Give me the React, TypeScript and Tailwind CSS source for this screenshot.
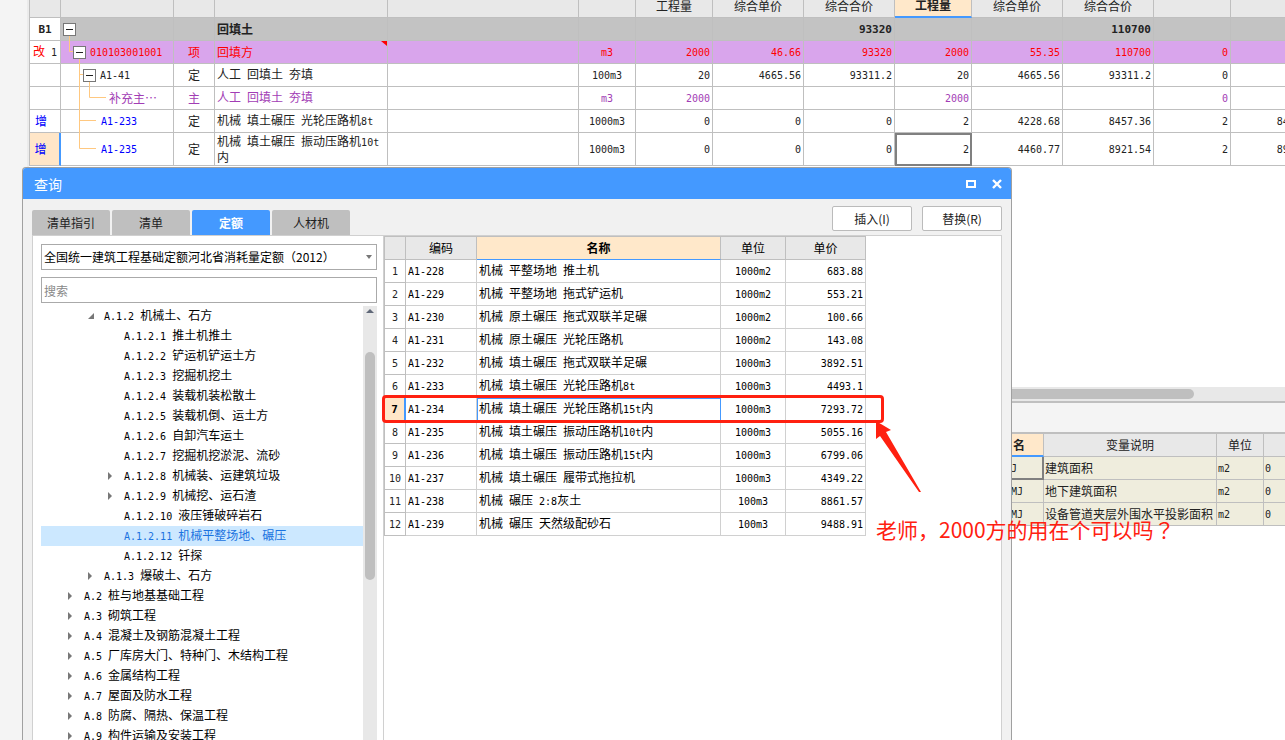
import { ReactNode } from "react";

// Latin runs are set in a half-width mono face so they line up with the CJK grid
function Mix({ children, bold }: { children: string; bold?: boolean }) {
  return (
    <>
      {children.split(/([\x20-\x7e]+)/).map((part, i) =>
        i % 2 ? (
          <span key={i} className={bold ? "font-[DejaVu_Sans_Mono,monospace] text-[11px]" : "font-[DejaVu_Sans_Mono,monospace] text-[10px]"}>
            {part}
          </span>
        ) : (
          part
        )
      )}
    </>
  );
}

type BillRow = {
  mark: ReactNode;
  code: string;
  kind: string;
  name: string;
  values: string[];
  pad: string;
  box?: boolean;
  lines: string;
  tone: string;
  cell: string;
  height: string;
};

const billRows: BillRow[] = [
  { mark: <span className="font-bold"><Mix bold>B1</Mix></span>, code: "", kind: "", name: "回填土", values: ["", "", "", "93320", "", "", "110700", "", ""], pad: "pl-0.5", box: true, lines: "M8.5 17V23", tone: "text-[#222] font-bold", cell: "bg-[#c3c3c3]", height: "h-[23px]" },
  { mark: <>改<span className="text-[#222]"><Mix> 1</Mix></span></>, code: "010103001001", kind: "项", name: "回填方", values: ["m3", "2000", "46.66", "93320", "2000", "55.35", "110700", "0", ""], pad: "pl-3", box: true, lines: "M8.5 0V10.5H12M18.5 17V23", tone: "text-[#f00]", cell: "bg-[#d9a5ec]", height: "h-[23px]" },
  { mark: "", code: "A1-41", kind: "定", name: "人工 回填土 夯填", values: ["100m3", "20", "4665.56", "93311.2", "20", "4665.56", "93311.2", "0", ""], pad: "pl-[22px]", box: true, lines: "M18.5 0V23M18.5 10.5H22M28.5 17V23", tone: "text-[#222]", cell: "bg-white", height: "h-[23px]" },
  { mark: "", code: "补充主…", kind: "主", name: "人工 回填土 夯填", values: ["m3", "2000", "", "", "2000", "", "", "0", ""], pad: "pl-12", lines: "M18.5 0V23M28.5 0V10.5H45", tone: "text-[#a23db5]", cell: "bg-white", height: "h-[23px]" },
  { mark: <span className="pr-2 text-[#00f]">增</span>, code: "A1-233", kind: "定", name: "机械 填土碾压 光轮压路机8t", values: ["1000m3", "0", "0", "0", "2", "4228.68", "8457.36", "2", "8457.36"], pad: "pl-10", lines: "M18.5 0V23M18.5 10.5H35", tone: "text-[#222]", cell: "bg-white", height: "h-[23px]" },
  { mark: <span className="pr-2 text-[#00f]">增</span>, code: "A1-235", kind: "定", name: "机械 填土碾压 振动压路机10t内", values: ["1000m3", "0", "0", "0", "2", "4460.77", "8921.54", "2", "8921.54"], pad: "pl-10", lines: "M18.5 0V15.5H35", tone: "text-[#222]", cell: "bg-white", height: "h-[33px]" },
];

const billHeads = ["", "", "", "", "", "", "工程量", "综合单价", "综合合价", "工程量", "综合单价", "综合合价", "", ""];

function BillTable() {
  return (
    <table className="-mt-1.5 w-[1293px] table-fixed border-separate border-spacing-0 border-l border-[#bfbfbf] leading-[14px]">
      <colgroup>
        <col className="w-[31px]" />
        <col className="w-[113px]" />
        <col className="w-[41px]" />
        <col className="w-[173px]" />
        <col className="w-[191px]" />
        <col className="w-[57px]" />
        <col className="w-[77px]" />
        <col className="w-[91px]" />
        <col className="w-[91px]" />
        <col className="w-[77px]" />
        <col className="w-[91px]" />
        <col className="w-[91px]" />
        <col className="w-[77px]" />
        <col className="w-[91px]" />
      </colgroup>
      <thead>
        <tr className="h-6">
          {billHeads.map((h, i) => (
            <th
              key={i}
              className={
                i === 9
                  ? "border-r border-b-2 border-r-[#bfbfbf] border-b-[#4499ff] bg-[#ffe8ca] p-0 font-bold"
                  : "border-r border-b border-[#bfbfbf] bg-[#e8e8e8] p-0 font-normal"
              }
            >
              {h}
            </th>
          ))}
        </tr>
      </thead>
      <tbody>
        {billRows.map((r, i) => (
          <tr key={i} className={`${r.height} ${r.tone}`}>
            <th
              className={
                i === 5
                  ? "border-r-2 border-b border-r-[#4499ff] border-b-[#bfbfbf] bg-[#ffe6c8] p-0 font-normal"
                  : "border-r border-b border-[#bfbfbf] bg-white p-0 font-normal whitespace-nowrap"
              }
            >
              {r.mark}
            </th>
            <td className={`relative border-r border-b border-[#bfbfbf] p-0 ${r.cell}`}>
              <svg className="absolute top-0 left-0 h-full w-full overflow-visible" fill="none" stroke="#ffc880">
                <path d={r.lines} />
              </svg>
              <div className={`relative flex items-center gap-1 whitespace-nowrap ${r.pad}`}>
                {r.box && (
                  <button aria-label="折叠" className="flex size-[13px] shrink-0 items-center justify-center border border-[#777] bg-white">
                    <span className="h-px w-[7px] bg-[#222]" />
                  </button>
                )}
                <span className={i > 3 ? "text-[#00f]" : ""}><Mix>{r.code}</Mix></span>
              </div>
            </td>
            <td className={`border-r border-b border-[#bfbfbf] p-0 text-center ${r.cell}`}>{r.kind}</td>
            <td className={`relative border-r border-b border-[#bfbfbf] px-0.5 py-0 ${r.cell}`}>
              <Mix>{r.name}</Mix>
              {i === 1 && (
                <svg className="absolute top-0 right-0" width="6" height="5" fill="#f00">
                  <path d="M0 0H6V5Z" />
                </svg>
              )}
            </td>
            <td className={`border-r border-b border-[#bfbfbf] p-0 ${r.cell}`} />
            {r.values.map((v, j) => (
              <td
                key={j}
                className={`border-r border-b border-[#bfbfbf] px-0.5 py-0 ${r.cell} ${j === 0 ? "text-center" : "text-right"} ${
                  i === 5 && j === 4 ? "outline-2 -outline-offset-2 outline-[#808080]" : ""
                }`}
              >
                <Mix bold={i === 0}>{v}</Mix>
              </td>
            ))}
          </tr>
        ))}
      </tbody>
    </table>
  );
}

const variables = [
  ["J", "建筑面积"],
  ["MJ", "地下建筑面积"],
  ["MJ", "设备管道夹层外围水平投影面积"],
];

function VariableTable() {
  return (
    <table className="w-full table-fixed border-separate border-spacing-0 leading-[14px]">
      <colgroup>
        <col className="w-[33px]" />
        <col className="w-[173px]" />
        <col className="w-[47px]" />
        <col />
      </colgroup>
      <thead>
        <tr className="h-[23px]">
          <th className="border-r border-b-2 border-r-[#bfbfbf] border-b-[#4499ff] bg-[#ffe8ca] py-0 pl-0.5 text-left font-bold">名</th>
          <th className="border-r border-b border-[#bfbfbf] bg-[#e8e8e8] p-0 font-normal">变量说明</th>
          <th className="border-r border-b border-[#bfbfbf] bg-[#e8e8e8] p-0 font-normal">单位</th>
          <th className="border-b border-[#bfbfbf] bg-[#e8e8e8] p-0" />
        </tr>
      </thead>
      <tbody>
        {variables.map(([code, text], i) => (
          <tr key={i} className="h-[23px] bg-[#efeddd]">
            <td className={i === 0 ? "border-r-2 border-b-2 border-[#808080] p-0" : "border-r border-b border-[#bfbfbf] p-0"}><Mix>{code}</Mix></td>
            <td className="border-r border-b border-[#bfbfbf] px-px py-0 whitespace-nowrap">{text}</td>
            <td className="border-r border-b border-[#bfbfbf] px-px py-0"><Mix>m2</Mix></td>
            <td className="border-b border-[#bfbfbf] px-px py-0"><Mix>0</Mix></td>
          </tr>
        ))}
      </tbody>
    </table>
  );
}

const tree = [
  { level: 1, text: "A.1.2 机械土、石方", arrow: "open" },
  { level: 2, text: "A.1.2.1 推土机推土" },
  { level: 2, text: "A.1.2.2 铲运机铲运土方" },
  { level: 2, text: "A.1.2.3 挖掘机挖土" },
  { level: 2, text: "A.1.2.4 装载机装松散土" },
  { level: 2, text: "A.1.2.5 装载机倒、运土方" },
  { level: 2, text: "A.1.2.6 自卸汽车运土" },
  { level: 2, text: "A.1.2.7 挖掘机挖淤泥、流砂" },
  { level: 2, text: "A.1.2.8 机械装、运建筑垃圾", arrow: "closed" },
  { level: 2, text: "A.1.2.9 机械挖、运石渣", arrow: "closed" },
  { level: 2, text: "A.1.2.10 液压锤破碎岩石" },
  { level: 2, text: "A.1.2.11 机械平整场地、碾压", selected: true },
  { level: 2, text: "A.1.2.12 钎探" },
  { level: 1, text: "A.1.3 爆破土、石方", arrow: "closed" },
  { level: 0, text: "A.2 桩与地基基础工程", arrow: "closed" },
  { level: 0, text: "A.3 砌筑工程", arrow: "closed" },
  { level: 0, text: "A.4 混凝土及钢筋混凝土工程", arrow: "closed" },
  { level: 0, text: "A.5 厂库房大门、特种门、木结构工程", arrow: "closed" },
  { level: 0, text: "A.6 金属结构工程", arrow: "closed" },
  { level: 0, text: "A.7 屋面及防水工程", arrow: "closed" },
  { level: 0, text: "A.8 防腐、隔热、保温工程", arrow: "closed" },
  { level: 0, text: "A.9 构件运输及安装工程", arrow: "closed" },
];
const indent = ["pl-[27px]", "pl-[47px]", "pl-[67px]"];

const quotas = [
  ["A1-228", "机械 平整场地 推土机", "1000m2", "683.88"],
  ["A1-229", "机械 平整场地 拖式铲运机", "1000m2", "553.21"],
  ["A1-230", "机械 原土碾压 拖式双联羊足碾", "1000m2", "100.66"],
  ["A1-231", "机械 原土碾压 光轮压路机", "1000m2", "143.08"],
  ["A1-232", "机械 填土碾压 拖式双联羊足碾", "1000m3", "3892.51"],
  ["A1-233", "机械 填土碾压 光轮压路机8t", "1000m3", "4493.1"],
  ["A1-234", "机械 填土碾压 光轮压路机15t内", "1000m3", "7293.72"],
  ["A1-235", "机械 填土碾压 振动压路机10t内", "1000m3", "5055.16"],
  ["A1-236", "机械 填土碾压 振动压路机15t内", "1000m3", "6799.06"],
  ["A1-237", "机械 填土碾压 履带式拖拉机", "1000m3", "4349.22"],
  ["A1-238", "机械 碾压 2:8灰土", "100m3", "8861.57"],
  ["A1-239", "机械 碾压 天然级配砂石", "100m3", "9488.91"],
];

function QuotaTable() {
  return (
    <table className="w-[482px] table-fixed border-separate border-spacing-0 self-start border-l border-[#bfbfbf] leading-[14px] text-black">
      <colgroup>
        <col className="w-[21px]" />
        <col className="w-[71px]" />
        <col className="w-[244px]" />
        <col className="w-[65px]" />
        <col className="w-20" />
      </colgroup>
      <thead>
        <tr className="h-6">
          {["", "编码", "名称", "单位", "单价"].map((h, i) => (
            <th
              key={i}
              className={
                i === 2
                  ? "border-y border-r border-t-[#bfbfbf] border-r-[#bfbfbf] border-b-[#4499ff] bg-[#ffe8ca] p-0 font-bold"
                  : "border-y border-r border-[#bfbfbf] bg-[#e8e8e8] p-0 font-normal"
              }
            >
              {h}
            </th>
          ))}
        </tr>
      </thead>
      <tbody>
        {quotas.map(([code, name, unit, price], i) => (
          <tr key={code} className="h-[23px]">
            <th
              className={
                i === 6
                  ? "border-r-2 border-b border-r-[#4499ff] border-b-[#bfbfbf] bg-[#ffe6c8] p-0 font-bold"
                  : "border-r border-b border-[#bfbfbf] p-0 font-normal text-[#222]"
              }
            >
              <Mix bold={i === 6}>{String(i + 1)}</Mix>
            </th>
            <td className="border-r border-b border-[#d0d0d0] px-0.5 py-0"><Mix>{code}</Mix></td>
            <td className={`border-r border-b border-[#d0d0d0] px-0.5 py-0 whitespace-nowrap ${i === 6 ? "outline -outline-offset-1 outline-[#4499ff]" : ""}`}><Mix>{name}</Mix></td>
            <td className="border-r border-b border-[#d0d0d0] p-0 text-center"><Mix>{unit}</Mix></td>
            <td className="border-r border-b border-[#d0d0d0] px-0.5 py-0 text-right"><Mix>{price}</Mix></td>
          </tr>
        ))}
      </tbody>
    </table>
  );
}

function QueryDialog() {
  return (
    <section className="absolute top-[167px] bottom-0 left-[22px] flex w-[990px] flex-col overflow-hidden rounded-t border border-b-0 border-[#a0a0a0] bg-[#f1f1f1]">
      <header className="flex h-[31px] shrink-0 items-center justify-between bg-[#4499ff] pr-[9px] pl-[11px] text-white">
        <h2 className="text-sm">查询</h2>
        <div className="flex gap-4">
          <button aria-label="最大化">
            <svg width="10" height="10" fill="none" stroke="#fff" strokeWidth="2"><path d="M1 2H9V8H1Z" /></svg>
          </button>
          <button aria-label="关闭">
            <svg width="10" height="10" fill="none" stroke="#fff" strokeWidth="2.4"><path d="M1 1L9 9M9 1L1 9" /></svg>
          </button>
        </div>
      </header>
      <div className="flex min-h-0 flex-1 flex-col px-[9px] pt-[7px]">
        <div className="flex h-[29px] shrink-0 items-start justify-between">
          <nav className="flex gap-0.5 self-end text-[#222]">
            {["清单指引", "清单", "定额", "人材机"].map((t) => (
              <button
                key={t}
                className={
                  t === "定额"
                    ? "h-[25px] w-[78px] rounded-t-xs bg-[#4499ff] font-bold text-white"
                    : "h-[25px] w-[78px] rounded-t-xs bg-[#bfbfbf]"
                }
              >
                {t}
              </button>
            ))}
          </nav>
          <div className="flex gap-2.5 text-[#222]">
            <button className="h-[25px] w-20 rounded-xs border border-[#bbb] bg-white">插入(I)</button>
            <button className="h-[25px] w-20 rounded-xs border border-[#bbb] bg-white">替换(R)</button>
          </div>
        </div>
        <div className="flex min-h-0 flex-1 border border-b-0 border-[#d0d0d0] bg-white">
          <div className="flex w-[351px] shrink-0 flex-col border-r border-[#d0d0d0] pt-2 pr-1.5 pl-2 text-black">
            <div className="relative">
              <select aria-label="定额库" className="h-[26px] w-full appearance-none border border-[#aaa] bg-white px-0.5">
                <option>全国统一建筑工程基础定额河北省消耗量定额（2012）</option>
              </select>
              <svg className="pointer-events-none absolute top-[11px] right-[5px]" width="6" height="4" fill="#777"><path d="M0 0H6L3 4Z" /></svg>
            </div>
            <input aria-label="搜索" placeholder="搜索" className="mt-[7px] h-[26px] w-full shrink-0 border border-[#aaa] px-0.5 placeholder:text-[#888]" />
            <div className="mt-[3px] flex min-h-0 flex-1">
              <ul className="min-w-0 flex-1 overflow-hidden">
                {tree.map((n) => (
                  <li key={n.text} className={`flex h-5 items-center whitespace-nowrap ${indent[n.level]} ${n.selected ? "bg-[#cce8ff] text-[#1a73e0]" : ""}`}>
                    <span className="w-4 shrink-0">
                      {n.arrow === "closed" && <svg width="5" height="8" fill="#777"><path d="M0 0L4 4L0 8Z" /></svg>}
                      {n.arrow === "open" && <svg width="7" height="7" fill="#777"><path d="M6 0V6H0Z" /></svg>}
                    </span>
                    <span className="pb-0.5"><Mix>{n.text}</Mix></span>
                  </li>
                ))}
              </ul>
              <div className="flex w-3.5 shrink-0 flex-col items-center bg-[#e8e8e8] pt-[3px]">
                <svg width="8" height="4" fill="#606878"><path d="M0 4L4 0L8 4Z" /></svg>
                <div className="mt-[39px] h-[228px] w-2.5 shrink-0 rounded-full bg-[#bfbfbf]" />
              </div>
            </div>
          </div>
          <QuotaTable />
        </div>
      </div>
    </section>
  );
}

export default function App() {
  return (
    <main lang="zh-CN" className="relative flex h-screen overflow-hidden bg-[#f4f4f4] font-['Noto_Sans_CJK_SC','Liberation_Sans',sans-serif] text-xs text-[#222]">
      <div className="w-[29px] shrink-0 border-r-2 border-[#ebebeb]" />
      <div className="flex min-w-0 flex-1 flex-col overflow-hidden">
        <div className="h-[387px] shrink-0 overflow-hidden bg-white">
          <BillTable />
        </div>
        <div className="h-3.5 shrink-0 bg-[#e8e8e8] py-0.5">
          <div className="h-2.5 w-[1165px] rounded-full bg-[#bfbfbf]" />
        </div>
        <div className="h-[33px] shrink-0 border-y-2 border-[#bfbfbf]" />
        <div className="flex-1 bg-white pl-[982px]">
          <VariableTable />
        </div>
      </div>
      <QueryDialog />
      <div className="absolute top-[395px] left-[382px] h-7 w-[502px] rounded-sm border-3 border-[#ff2010]" />
      <svg className="absolute top-[420px] left-[874px]" width="50" height="74" fill="#ff2010">
        <path d="M2 1L17 10L12 12L47 72L45 72L6 16L2 19Z" />
      </svg>
      <p className="absolute top-[515px] left-[876px] text-[21px] leading-7 whitespace-nowrap text-[#ff2010]">
        老师，2000方的用在个可以吗<span lang="ja" className="font-['Noto_Sans_CJK_JP',sans-serif]">？</span>
      </p>
    </main>
  );
}
